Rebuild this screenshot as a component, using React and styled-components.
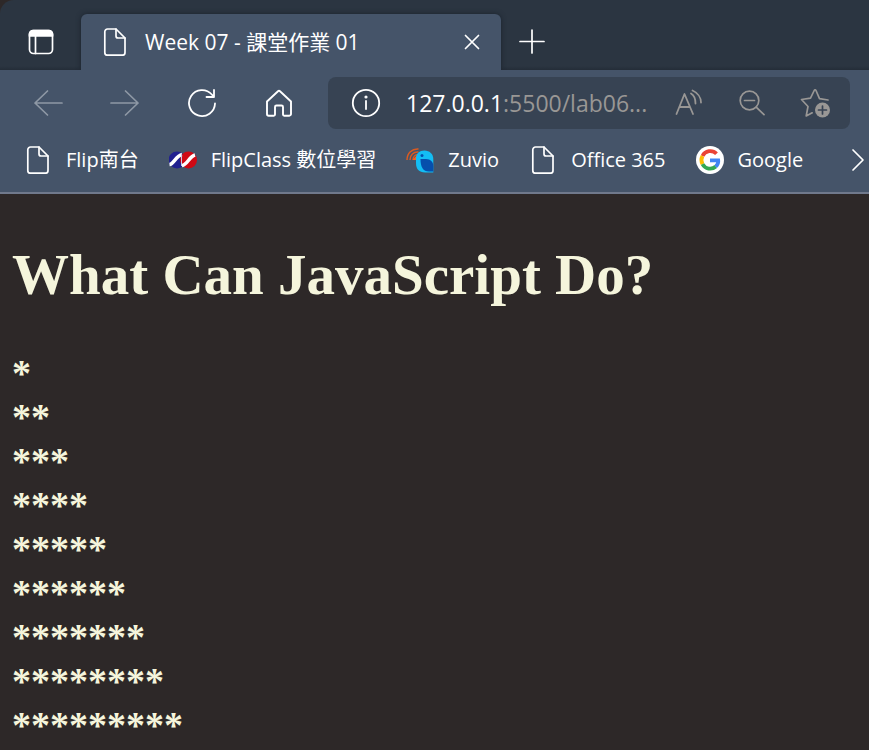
import React from "react";
import styled, { createGlobalStyle } from "styled-components";

const GlobalStyle = createGlobalStyle`
  * { box-sizing: border-box; }
  body { margin: 0; background: #2d2828; }
`;

const Browser = styled.div`
  min-height: 100vh;
  overflow: hidden;
  background: #2d2828;
  font-family: "Open Sans", "Noto Sans CJK TC", sans-serif;
  color: #ffffff;
`;

const TabStrip = styled.header`
  display: flex;
  align-items: flex-end;
  height: 70px;
  padding-top: 14px;
  border-top-left-radius: 14px;
  background: linear-gradient(#2b3541 66px, #242d38 70px);
`;

const IconButton = styled.button`
  display: flex;
  flex: none;
  align-items: center;
  justify-content: center;
  width: ${(p) => p.$width || 36}px;
  height: 56px;
  padding: 0;
  border: 0;
  background: none;
  color: ${(p) => p.$color || "#ffffff"};
`;

const ToolButton = styled(IconButton)`
  height: 52px;
`;

const Tab = styled.div`
  display: flex;
  align-items: center;
  flex: 0 1 420px;
  height: 56px;
  padding-left: 20px;
  padding-right: 11px;
  border-radius: 6px 6px 0 0;
  background: #455469;
  box-shadow: 0 0 5px #1a222c;
  clip-path: inset(-6px -6px 0 -6px);
`;

const TabTitle = styled.span`
  flex: 1;
  margin-left: 16px;
  font-size: 21px;
  line-height: 28px;
  white-space: nowrap;
`;

const Chrome = styled.div`
  background: #455469;
  border-bottom: 2px solid #70798c;
`;

const Toolbar = styled.div`
  display: flex;
  align-items: center;
  padding: 7px 19px 5px 9px;
`;

const AddressBar = styled.div`
  display: flex;
  align-items: center;
  flex: 1;
  min-width: 0;
  height: 52px;
  margin-left: 11px;
  padding-left: 20px;
  padding-right: 4px;
  border-radius: 8px;
  background: #374353;
`;

const Url = styled.a`
  flex: 1;
  margin-left: 22px;
  color: #999795;
  font-size: 23px;
  line-height: 32px;
  text-decoration: none;
  white-space: nowrap;
`;

const Host = styled.span`
  color: #ffffff;
`;

const Bookmarks = styled.nav`
  display: flex;
  align-items: center;
  gap: 30px;
  height: 58px;
  padding: 0 4px 6px 24px;
`;

const Bookmark = styled.a`
  display: flex;
  align-items: center;
  gap: 14px;
  flex: none;
  color: #ffffff;
  font-size: 20px;
  line-height: 28px;
  text-decoration: none;
  white-space: nowrap;
`;

const More = styled(IconButton)`
  height: 36px;
  margin-left: auto;
`;

const Page = styled.main`
  padding: 48px 12px 0;
  color: #f5f5dc;
  font-family: "Liberation Serif", serif;
`;

const Heading = styled.h1`
  margin: 0 0 43px;
  font-size: 57px;
  line-height: 66px;
`;

const Stars = styled.div`
  font-size: 38px;
  font-weight: bold;
  line-height: 44px;
`;

const Glyph = styled.svg`
  display: block;
  flex: none;
  fill: none;
  stroke: currentColor;
  stroke-width: ${(p) => p.$stroke || 2};
  stroke-linejoin: round;
  stroke-linecap: round;
`;

const FileIcon = () => (
  <Glyph width="28" height="28" viewBox="0 0 28 28" $stroke={1.7} aria-hidden="true">
    <path d="M6.500 1h8.500l9 9v14.500a2.700 2.700 0 0 1-2.700 2.700H6.500a2.700 2.700 0 0 1-2.700-2.700V3.700A2.700 2.700 0 0 1 6.500 1z" />
    <path d="M15 1v7a2 2 0 0 0 2 2h7" />
  </Glyph>
);

const TabsIcon = () => (
  <Glyph width="26" height="26" viewBox="0 0 26 26" $stroke={1.7} aria-hidden="true">
    <rect x="1.500" y="1.500" width="23" height="23" rx="4" />
    <path d="M7.500 7v17.500" />
    <path d="M1.500 7V5a3.500 3.500 0 0 1 3.500-3.500h16A3.500 3.500 0 0 1 24.500 5v2z" fill="currentColor" />
  </Glyph>
);

const ArrowIcon = ({ forward }) => (
  <Glyph width="30" height="28" viewBox="0 0 30 28" $stroke={1.7} aria-hidden="true">
    <path d={forward ? "M1 14h27M15.500 2l12.500 12-12.500 12" : "M29 14H2M14.500 2L2 14l12.500 12"} />
  </Glyph>
);

const ReloadIcon = () => (
  <Glyph width="30" height="30" viewBox="0 0 30 30" $stroke={1.8} aria-hidden="true">
    <path d="M28 15.500A13 13 0 1 1 24.800 6.500L27 9M27 2v7h-7.500" />
  </Glyph>
);

const HomeIcon = () => (
  <Glyph width="28" height="28" viewBox="0 0 28 28" $stroke={1.9} aria-hidden="true">
    <path d="M2 12.500L13 2.300a1.500 1.500 0 0 1 2 0L26 12.500V25a1.700 1.700 0 0 1-1.700 1.700h-5.100a1.200 1.200 0 0 1-1.200-1.200V18a1.500 1.500 0 0 0-1.500-1.500h-5A1.500 1.500 0 0 0 10 18v7.500a1.200 1.200 0 0 1-1.200 1.200H3.700A1.700 1.700 0 0 1 2 25z" />
  </Glyph>
);

const InfoIcon = () => (
  <Glyph width="30" height="30" viewBox="0 0 30 30" $stroke={1.8} aria-hidden="true">
    <circle cx="15" cy="15" r="13.200" />
    <path d="M15 13v8" />
    <circle cx="15" cy="9" r="0.700" fill="currentColor" />
  </Glyph>
);

const ReadIcon = () => (
  <Glyph width="28" height="28" viewBox="0 0 28 28" $stroke={1.8} aria-hidden="true">
    <path d="M1.500 25L9.500 5L18 25M4.500 18h10.500" />
    <path d="M16 4.500c2.700 1.600 4.500 4.500 4.500 10M17.500 1.500c5 2.200 8.500 7 8.500 12" />
  </Glyph>
);

const ZoomOutIcon = () => (
  <Glyph width="28" height="28" viewBox="0 0 28 28" $stroke={1.7} aria-hidden="true">
    <circle cx="11.500" cy="11.500" r="9.300" />
    <path d="M6.500 11.500h10M18.200 18.200l7.800 7.500" />
  </Glyph>
);

const FavoriteIcon = () => (
  <Glyph width="32" height="30" viewBox="0 0 32 30" $stroke={1.7} aria-hidden="true">
    <path d="M29 12l-8.500-1.300L17 2.500a1 1 0 0 0-1.800 0L11.500 10.200 2.500 11.500l6.500 7-1.800 9.500 6-3.200" />
    <circle cx="23.500" cy="22" r="7.500" fill="currentColor" stroke="none" />
    <path d="M23.500 18v8M19.500 22h8" stroke="#374353" />
  </Glyph>
);

const CloseIcon = () => (
  <Glyph width="18" height="18" viewBox="0 0 18 18" $stroke={1.7} aria-hidden="true">
    <path d="M2.500 2.500l13 13M15.500 2.500l-13 13" />
  </Glyph>
);

const PlusIcon = () => (
  <Glyph width="26" height="26" viewBox="0 0 26 26" $stroke={1.7} aria-hidden="true">
    <path d="M13 1v23M1 12.500h24" />
  </Glyph>
);

const ChevronIcon = () => (
  <Glyph width="16" height="24" viewBox="0 0 16 24" $stroke={1.7} aria-hidden="true">
    <path d="M4 2l10 10L4 22" />
  </Glyph>
);

const FlipClassIcon = () => (
  <svg width="28" height="20" viewBox="0 0 28 20" aria-hidden="true">
    <circle cx="8" cy="10" r="8.500" fill="#20208f" />
    <circle cx="19.500" cy="10" r="8.500" fill="#cf0814" />
    <path d="M0.500 14.500C5 14 7 5.500 13 4.500" fill="none" stroke="#ffffff" strokeWidth="3.500" />
    <path d="M13 15.500C18.500 15 20 6.500 26 5" fill="none" stroke="#ffffff" strokeWidth="3.500" />
    <path d="M12.500 4v12" fill="none" stroke="#c9cbe6" strokeWidth="1" />
  </svg>
);

const ZuvioIcon = () => (
  <svg width="28" height="28" viewBox="0 0 28 28" aria-hidden="true">
    <g fill="none" stroke="#dc5b20" strokeWidth="1.500">
      <path d="M1 14C1 7 6 2.500 12.500 3" />
      <path d="M4 14c0-5 3.500-8.500 8.500-8" />
      <path d="M7 14c0-3 2-5.500 5-5.500" />
    </g>
    <path d="M11 9v5H6.500z" fill="#f26522" />
    <path d="M18.500 4.500c5 0 8.800 3.500 8.800 8.500v13.500H19c-6 0-9-3.500-9-9.500v-5c0-4.500 3.500-7.500 8.500-7.500z" fill="#13bdf4" />
    <path d="M14.500 13H20c4.500 0 7.300 3 7.300 7v5.500H23c-6 0-8.500-4.500-8.500-12.500z" fill="#064fac" />
    <circle cx="16" cy="9.500" r="1.500" fill="#064fac" />
  </svg>
);

const GoogleIcon = () => (
  <svg width="28" height="28" viewBox="0 0 28 28" aria-hidden="true">
    <circle cx="14" cy="14" r="14" fill="#ffffff" />
    <g fill="none" strokeWidth="3.800">
      <path d="M20.500 7.800A8.600 8.600 0 0 0 6.500 10" stroke="#ea4335" />
      <path d="M6.500 10a8.600 8.600 0 0 0 0 8.200" stroke="#fbbc05" />
      <path d="M6.500 18.200a8.600 8.600 0 0 0 13.300 2.300" stroke="#34a853" />
      <path d="M19.700 20.600c2-1.800 2.800-4.200 2.500-6.300H14" stroke="#4285f4" />
    </g>
  </svg>
);

const bookmarks = [
  { label: "Flip南台", Icon: FileIcon },
  { label: "FlipClass 數位學習", Icon: FlipClassIcon },
  { label: "Zuvio", Icon: ZuvioIcon },
  { label: "Office 365", Icon: FileIcon },
  { label: "Google", Icon: GoogleIcon },
];

const rows = Array.from({ length: 9 }, (_, i) => "*".repeat(i + 1));

export default function App() {
  return (
    <Browser>
      <GlobalStyle />
      <TabStrip>
        <IconButton $width={81} aria-label="Tab actions"><TabsIcon /></IconButton>
        <Tab>
          <FileIcon />
          <TabTitle>Week 07 - 課堂作業 01</TabTitle>
          <IconButton aria-label="Close tab"><CloseIcon /></IconButton>
        </Tab>
        <IconButton $width={62} aria-label="New tab"><PlusIcon /></IconButton>
      </TabStrip>
      <Chrome>
        <Toolbar>
          <ToolButton $width={77} $color="#8e98a5" aria-label="Back"><ArrowIcon /></ToolButton>
          <ToolButton $width={77} $color="#8e98a5" aria-label="Forward"><ArrowIcon forward /></ToolButton>
          <ToolButton $width={77} aria-label="Reload"><ReloadIcon /></ToolButton>
          <ToolButton $width={77} aria-label="Home"><HomeIcon /></ToolButton>
          <AddressBar>
            <ToolButton aria-label="Site information"><InfoIcon /></ToolButton>
            <Url href="#"><Host>127.0.0.1</Host>:5500/lab06...</Url>
            <ToolButton $width={63} $color="#999795" aria-label="Read aloud"><ReadIcon /></ToolButton>
            <ToolButton $width={63} $color="#999795" aria-label="Zoom out"><ZoomOutIcon /></ToolButton>
            <ToolButton $width={63} $color="#999795" aria-label="Add to favorites"><FavoriteIcon /></ToolButton>
          </AddressBar>
        </Toolbar>
        <Bookmarks>
          {bookmarks.map(({ label, Icon }) => (
            <Bookmark href="#" key={label}><Icon />{label}</Bookmark>
          ))}
          <More $width={16} aria-label="More bookmarks"><ChevronIcon /></More>
        </Bookmarks>
      </Chrome>
      <Page>
        <Heading>What Can JavaScript Do?</Heading>
        {rows.map((row) => <Stars key={row}>{row}</Stars>)}
      </Page>
    </Browser>
  );
}
